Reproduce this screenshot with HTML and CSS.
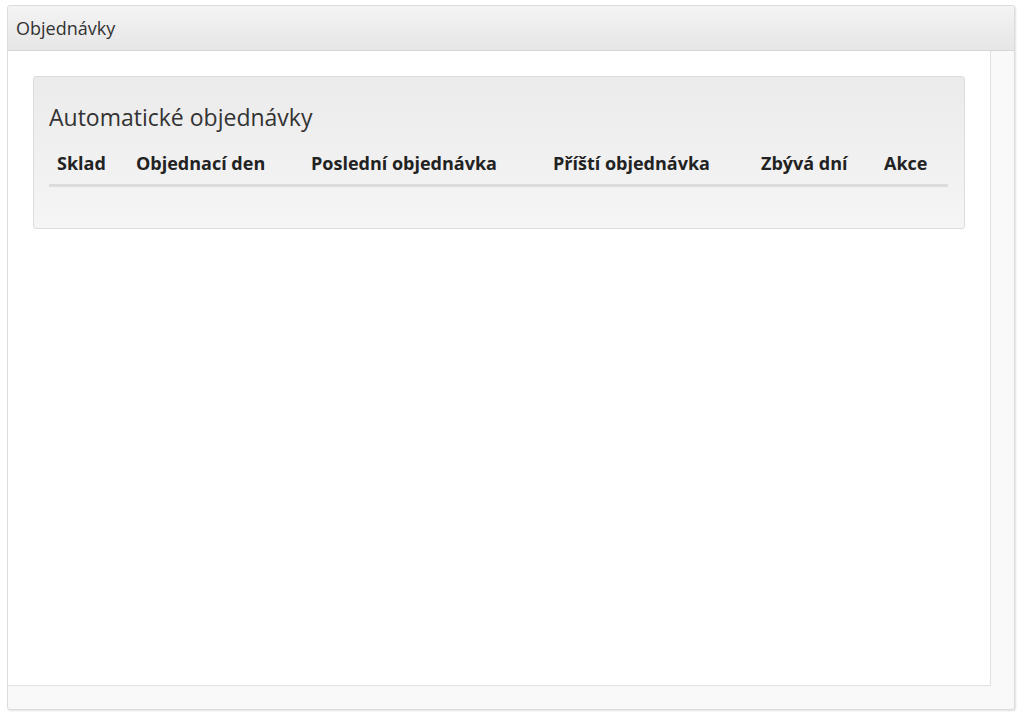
FILE: index.html
```html
<!DOCTYPE html>
<html lang="cs">
<head>
    <meta charset="UTF-8">
    <title>Objednávky</title>
    <link rel="stylesheet" href="styles.css">
</head>
<body>
<div class="window">
    <div class="window-header">Objednávky</div>
    <div class="window-main">
        <div class="window-content">
            <div class="panel">
                <h2>Automatické objednávky</h2>
                <table class="orders">
                    <thead>
                    <tr>
                        <th class="col-sklad">Sklad</th>
                        <th class="col-den">Objednací den</th>
                        <th class="col-posledni">Poslední objednávka</th>
                        <th class="col-pristi">Příští objednávka</th>
                        <th class="col-zbyva">Zbývá dní</th>
                        <th class="col-akce">Akce</th>
                    </tr>
                    </thead>
                    <tbody></tbody>
                </table>
            </div>
        </div>
        <div class="window-side"></div>
    </div>
    <div class="window-footer"></div>
</div>
</body>
</html>
```

FILE: styles.css
```css
* {
    margin: 0;
    padding: 0;
    box-sizing: border-box;
    font-family: "Open Sans", Arial, sans-serif;
}

body {
    background: #fff;
    padding: 5px 9px 8px 7px;
    height: 100vh;
}

.window {
    display: flex;
    flex-direction: column;
    height: 705px;
    border: 1px solid #dcdcdc;
    border-radius: 3px;
    box-shadow: 1px 1px 2px rgba(0, 0, 0, 0.12);
    background: #f9f9f9;
}

.window-header {
    height: 45px;
    padding: 0 8px;
    line-height: 44px;
    font-size: 18px;
    color: #333;
    background: linear-gradient(#f4f4f4, #e6e6e6);
    border-bottom: 1px solid #d6d6d6;
    border-radius: 3px 3px 0 0;
}

.window-main {
    flex: 1;
    display: flex;
}

.window-content {
    flex: 1;
    background: #fff;
    border-right: 1px solid #e0e0e0;
    border-bottom: 1px solid #e0e0e0;
    padding: 25px 25px 0 25px;
}

.window-side {
    width: 23px;
}

.window-footer {
    height: 23px;
}

.panel {
    width: 932px;
    height: 153px;
    background: linear-gradient(#ebebeb, #f5f5f5);
    border: 1px solid #dcdcdc;
    border-radius: 3px;
    padding: 23px 15px 0 15px;
}

.panel h2 {
    font-size: 23px;
    font-weight: normal;
    color: #333;
    line-height: 34px;
    margin-bottom: 10px;
}

.orders {
    width: 899px;
    border-collapse: collapse;
}

.orders th {
    text-align: left;
    font-size: 18px;
    font-weight: bold;
    color: #222;
    padding: 7px 8px 9px 8px;
    border-bottom: 3px solid #dcdcdc;
    white-space: nowrap;
}

.col-sklad { width: 79px; }
.col-den { width: 175px; }
.col-posledni { width: 242px; }
.col-pristi { width: 208px; }
.col-zbyva { width: 123px; }
```
